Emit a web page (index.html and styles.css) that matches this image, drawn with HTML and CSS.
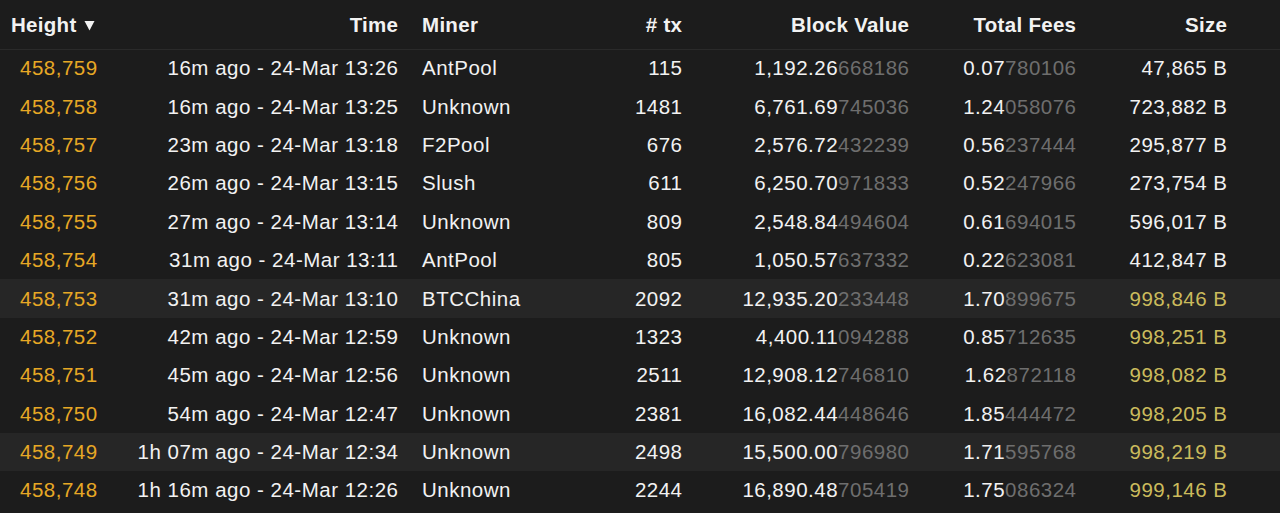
FILE: index.html
```html
<!DOCTYPE html>
<html>
<head>
<meta charset="utf-8">
<link rel="stylesheet" href="styles.css">
</head>
<body>
<table class="blocks">
  <colgroup>
    <col class="c-height"><col class="c-time"><col class="c-miner"><col class="c-tx"><col class="c-value"><col class="c-fees"><col class="c-size"><col class="c-rest">
  </colgroup>
  <thead>
    <tr>
      <th class="h-height">Height <svg class="sort" width="11" height="11" viewBox="0 0 11 11"><path d="M0.5 1 L10.5 1 L5.5 10.5 Z" fill="#f2f2f2"/></svg></th>
      <th class="r">Time</th>
      <th class="l">Miner</th>
      <th class="r"># tx</th>
      <th class="r">Block Value</th>
      <th class="r">Total Fees</th>
      <th class="r">Size</th>
      <th></th>
    </tr>
  </thead>
  <tbody>
    <tr><td class="height">458,759</td><td class="r">16m ago - 24-Mar 13:26</td><td class="l">AntPool</td><td class="r">115</td><td class="r">1,192.26<span class="dim">668186</span></td><td class="r">0.07<span class="dim">780106</span></td><td class="r">47,865 B</td><td></td></tr>
    <tr><td class="height">458,758</td><td class="r">16m ago - 24-Mar 13:25</td><td class="l">Unknown</td><td class="r">1481</td><td class="r">6,761.69<span class="dim">745036</span></td><td class="r">1.24<span class="dim">058076</span></td><td class="r">723,882 B</td><td></td></tr>
    <tr><td class="height">458,757</td><td class="r">23m ago - 24-Mar 13:18</td><td class="l">F2Pool</td><td class="r">676</td><td class="r">2,576.72<span class="dim">432239</span></td><td class="r">0.56<span class="dim">237444</span></td><td class="r">295,877 B</td><td></td></tr>
    <tr><td class="height">458,756</td><td class="r">26m ago - 24-Mar 13:15</td><td class="l">Slush</td><td class="r">611</td><td class="r">6,250.70<span class="dim">971833</span></td><td class="r">0.52<span class="dim">247966</span></td><td class="r">273,754 B</td><td></td></tr>
    <tr><td class="height">458,755</td><td class="r">27m ago - 24-Mar 13:14</td><td class="l">Unknown</td><td class="r">809</td><td class="r">2,548.84<span class="dim">494604</span></td><td class="r">0.61<span class="dim">694015</span></td><td class="r">596,017 B</td><td></td></tr>
    <tr><td class="height">458,754</td><td class="r">31m ago - 24-Mar 13:11</td><td class="l">AntPool</td><td class="r">805</td><td class="r">1,050.57<span class="dim">637332</span></td><td class="r">0.22<span class="dim">623081</span></td><td class="r">412,847 B</td><td></td></tr>
    <tr class="hl"><td class="height">458,753</td><td class="r">31m ago - 24-Mar 13:10</td><td class="l">BTCChina</td><td class="r">2092</td><td class="r">12,935.20<span class="dim">233448</span></td><td class="r">1.70<span class="dim">899675</span></td><td class="r full">998,846 B</td><td></td></tr>
    <tr><td class="height">458,752</td><td class="r">42m ago - 24-Mar 12:59</td><td class="l">Unknown</td><td class="r">1323</td><td class="r">4,400.11<span class="dim">094288</span></td><td class="r">0.85<span class="dim">712635</span></td><td class="r full">998,251 B</td><td></td></tr>
    <tr><td class="height">458,751</td><td class="r">45m ago - 24-Mar 12:56</td><td class="l">Unknown</td><td class="r">2511</td><td class="r">12,908.12<span class="dim">746810</span></td><td class="r">1.62<span class="dim">872118</span></td><td class="r full">998,082 B</td><td></td></tr>
    <tr><td class="height">458,750</td><td class="r">54m ago - 24-Mar 12:47</td><td class="l">Unknown</td><td class="r">2381</td><td class="r">16,082.44<span class="dim">448646</span></td><td class="r">1.85<span class="dim">444472</span></td><td class="r full">998,205 B</td><td></td></tr>
    <tr class="hl"><td class="height">458,749</td><td class="r">1h 07m ago - 24-Mar 12:34</td><td class="l">Unknown</td><td class="r">2498</td><td class="r">15,500.00<span class="dim">796980</span></td><td class="r">1.71<span class="dim">595768</span></td><td class="r full">998,219 B</td><td></td></tr>
    <tr><td class="height">458,748</td><td class="r">1h 16m ago - 24-Mar 12:26</td><td class="l">Unknown</td><td class="r">2244</td><td class="r">16,890.48<span class="dim">705419</span></td><td class="r">1.75<span class="dim">086324</span></td><td class="r full">999,146 B</td><td></td></tr>
  </tbody>
</table>
</body>
</html>
```

FILE: styles.css
```css
html, body {
  margin: 0;
  padding: 0;
  background: #1c1c1c;
  height: 100%;
  overflow: hidden;
}
body {
  font-family: "Liberation Sans", Arial, sans-serif;
  font-size: 20.5px;
  letter-spacing: 0.5px;
  color: #f2f2f2;
}
.blocks {
  width: 1280px;
  border-collapse: collapse;
  table-layout: fixed;
}
.c-height { width: 120px; }
.c-time { width: 290px; }
.c-miner { width: 190px; }
.c-tx { width: 94px; }
.c-value { width: 227px; }
.c-fees { width: 167px; }
.c-size { width: 151px; }
.c-rest { width: 41px; }

th, td {
  padding: 0 12px;
  white-space: nowrap;
}
thead tr {
  height: 49px;
  border-bottom: 1px solid #2a2a2a;
}
th {
  font-weight: bold;
  letter-spacing: 0.3px;
  vertical-align: middle;
  padding-top: 2px;
}
th.r { padding-right: 11.7px; }
.h-height {
  text-align: left;
  padding-left: 11px;
}
.sort {
  vertical-align: 1px;
  margin-left: 1px;
}
tbody tr {
  height: 38.4px;
}
tbody tr.hl {
  background: #262626;
}
td {
  vertical-align: middle;
}
.r { text-align: right; padding-right: 11.5px; }
.l { text-align: left; }
.height {
  color: #e7a825;
  text-align: left;
  padding-left: 20px;
}
.dim { color: #6e6e6e; }
.full { color: #cbbb5c; }
```
